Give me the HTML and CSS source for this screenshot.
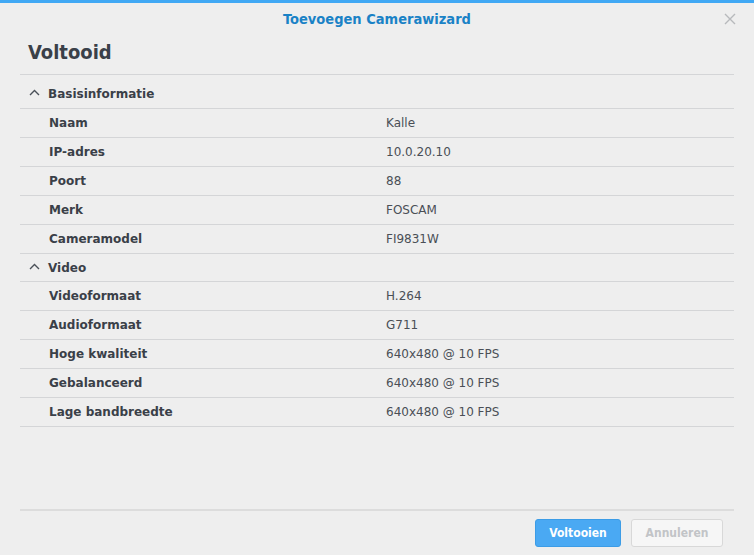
FILE: index.html
```html
<!DOCTYPE html>
<html lang="nl">
<head>
<meta charset="utf-8">
<link rel="stylesheet" href="styles.css">
</head>
<body>
<div class="dialog">
  <div class="topbar"></div>
  <div class="header">
    <div class="title">Toevoegen Camerawizard</div>
    <div class="close">
      <svg width="12" height="12" viewBox="0 0 12 12"><path d="M1 1L11 11M11 1L1 11" stroke="#b7b9bc" stroke-width="1.4" fill="none"/></svg>
    </div>
  </div>
  <h1 class="step">Voltooid</h1>
  <div class="content">
    <div class="table">
      <div class="section">
        <svg class="chev" width="11" height="7" viewBox="0 0 11 7"><path d="M1 6L5.5 1.5L10 6" stroke="#4a5058" stroke-width="1.4" fill="none"/></svg>
        <span>Basisinformatie</span>
      </div>
      <div class="row"><span class="label">Naam</span><span class="value">Kalle</span></div>
      <div class="row"><span class="label">IP-adres</span><span class="value">10.0.20.10</span></div>
      <div class="row"><span class="label">Poort</span><span class="value">88</span></div>
      <div class="row"><span class="label">Merk</span><span class="value">FOSCAM</span></div>
      <div class="row"><span class="label">Cameramodel</span><span class="value">FI9831W</span></div>
      <div class="section">
        <svg class="chev" width="11" height="7" viewBox="0 0 11 7"><path d="M1 6L5.5 1.5L10 6" stroke="#4a5058" stroke-width="1.4" fill="none"/></svg>
        <span>Video</span>
      </div>
      <div class="row"><span class="label">Videoformaat</span><span class="value">H.264</span></div>
      <div class="row"><span class="label">Audioformaat</span><span class="value">G711</span></div>
      <div class="row"><span class="label">Hoge kwaliteit</span><span class="value">640x480 @ 10 FPS</span></div>
      <div class="row"><span class="label">Gebalanceerd</span><span class="value">640x480 @ 10 FPS</span></div>
      <div class="row"><span class="label">Lage bandbreedte</span><span class="value">640x480 @ 10 FPS</span></div>
    </div>
  </div>
  <div class="footer">
    <button class="btn primary">Voltooien</button>
    <button class="btn disabled">Annuleren</button>
  </div>
</div>
</body>
</html>
```
FILE: styles.css
```css
html, body {
  margin: 0;
  padding: 0;
  background: #eeeeee;
}
body {
  width: 754px;
  height: 555px;
  overflow: hidden;
  font-family: "DejaVu Sans", Verdana, sans-serif;
}
.dialog {
  display: flex;
  flex-direction: column;
  height: 555px;
}
.topbar {
  height: 3px;
  background: #40a8f4;
}
.header {
  position: relative;
  height: 32px;
  display: flex;
  align-items: center;
  justify-content: center;
}
.title {
  font-family: "DejaVu Sans Condensed", "DejaVu Sans", sans-serif;
  font-weight: bold;
  font-size: 14.5px;
  color: #1a82c6;
}
.close {
  position: absolute;
  right: 18px;
  top: 10px;
  width: 12px;
  height: 12px;
  display: flex;
}
.step {
  margin: 0;
  padding: 5px 0 0 28px;
  height: 39px;
  box-sizing: border-box;
  font-family: "DejaVu Sans Condensed", "DejaVu Sans", sans-serif;
  font-weight: bold;
  font-size: 20px;
  color: #3a4048;
  line-height: 25px;
}
.content {
  flex: 1;
  margin: 0 20px;
  border-top: 1px solid #d4d5d7;
}
.table {
  display: flex;
  flex-direction: column;
}
.section {
  height: 34px;
  display: flex;
  align-items: center;
  padding: 5px 0 0 9px;
  box-sizing: border-box;
  border-bottom: 1px solid #d4d5d7;
  font-weight: bold;
  font-size: 12px;
  color: #3a4048;
}
.chev {
  margin-right: 8px;
  margin-top: -3px;
}
.section:not(:first-child) {
  height: 28px;
  padding-top: 0;
}
.row {
  height: 29px;
  display: flex;
  align-items: center;
  border-bottom: 1px solid #d4d5d7;
  box-sizing: border-box;
}
.label {
  width: 337px;
  padding-left: 29px;
  font-weight: bold;
  font-size: 12px;
  color: #3a4048;
}
.value {
  font-size: 12px;
  color: #4a4f56;
}
.footer {
  height: 46px;
  box-sizing: border-box;
  margin: 0 20px;
  border-top: 2px solid #dcdcdc;
  display: flex;
  justify-content: flex-end;
  align-items: flex-start;
  padding: 8px 11px 0 0;
  gap: 10px;
}
.btn {
  height: 28px;
  border-radius: 3px;
  font-family: "DejaVu Sans Condensed", "DejaVu Sans", sans-serif;
  font-weight: bold;
  font-size: 12px;
  padding: 0;
}
.primary {
  width: 86px;
  background: #4aa9f3;
  border: 1px solid #3c9ce6;
  color: #ffffff;
}
.disabled {
  width: 92px;
  background: #f6f6f6;
  border: 1px solid #d8d8d8;
  color: #c2c4c7;
}
```
